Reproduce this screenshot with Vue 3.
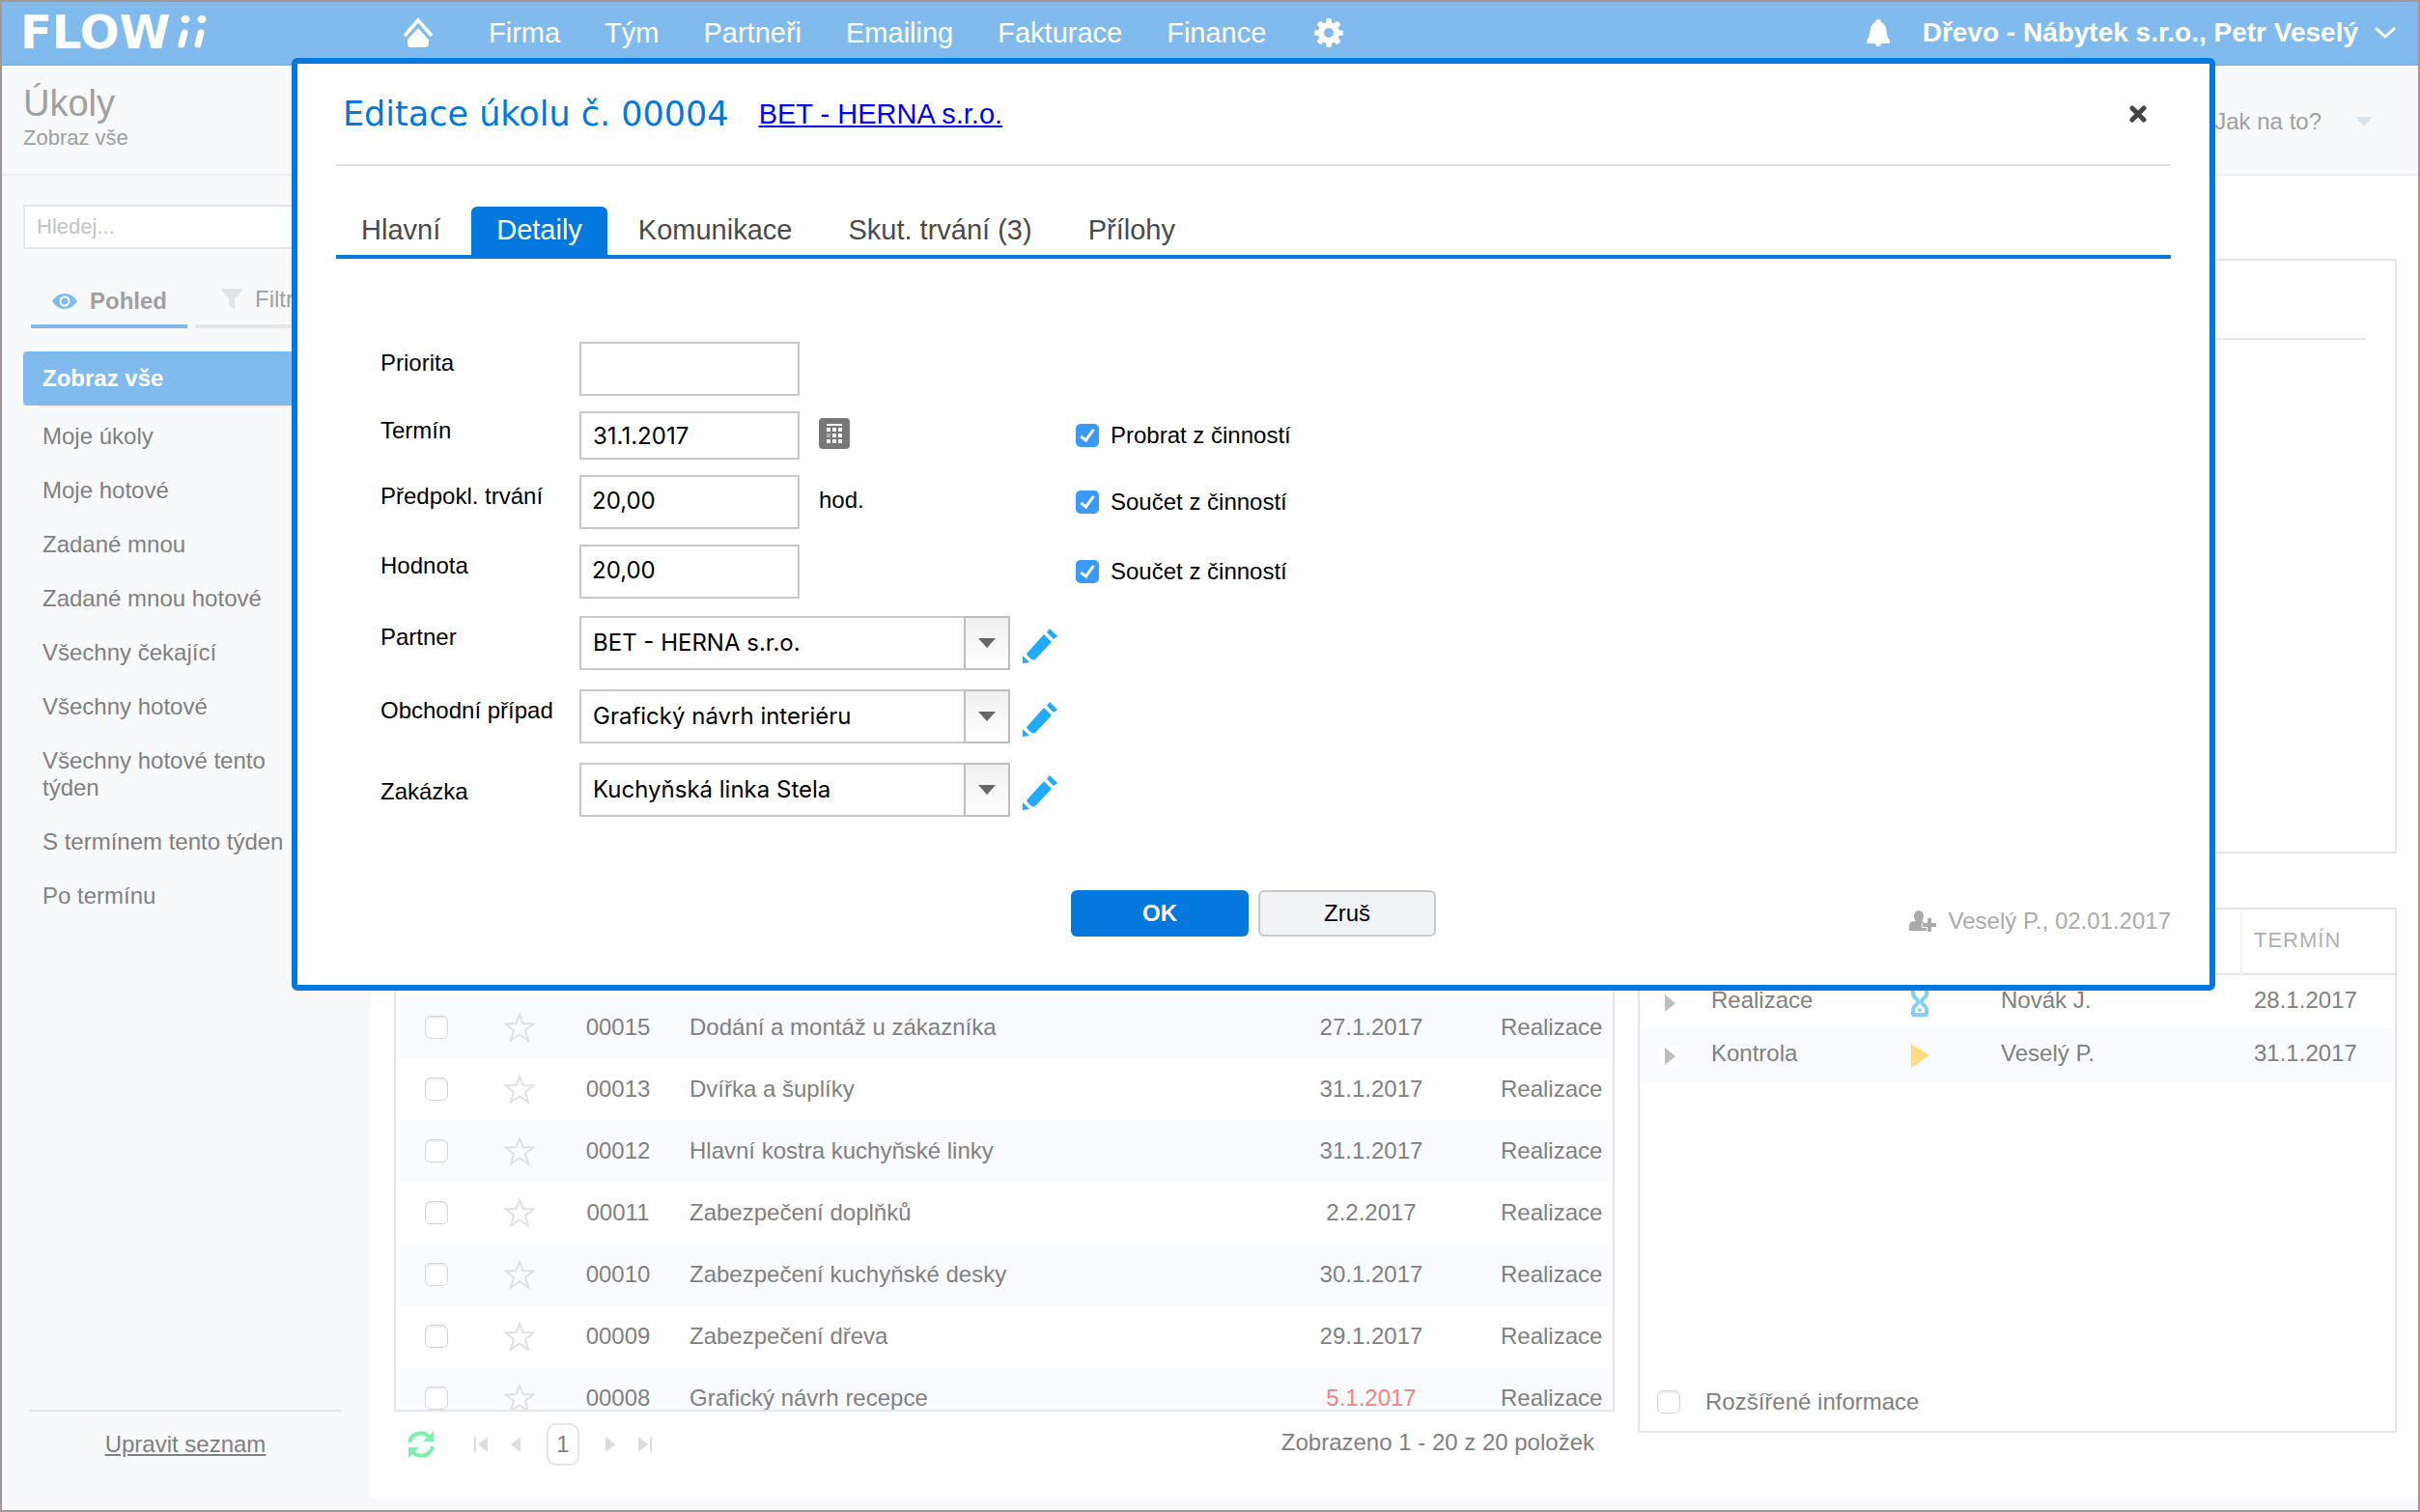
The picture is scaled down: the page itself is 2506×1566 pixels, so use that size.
<script setup>
import { ref } from 'vue'

const menu = ['Firma', 'Tým', 'Partneři', 'Emailing', 'Fakturace', 'Finance']

const views = [
  'Zobraz vše',
  'Moje úkoly',
  'Moje hotové',
  'Zadané mnou',
  'Zadané mnou hotové',
  'Všechny čekající',
  'Všechny hotové',
  'Všechny hotové tento týden',
  'S termínem tento týden',
  'Po termínu',
]
const activeView = ref('Zobraz vše')

const tasks = [
  { id: '00015', name: 'Dodání a montáž u zákazníka', due: '27.1.2017', phase: 'Realizace' },
  { id: '00013', name: 'Dvířka a šuplíky', due: '31.1.2017', phase: 'Realizace' },
  { id: '00012', name: 'Hlavní kostra kuchyňské linky', due: '31.1.2017', phase: 'Realizace' },
  { id: '00011', name: 'Zabezpečení doplňků', due: '2.2.2017', phase: 'Realizace' },
  { id: '00010', name: 'Zabezpečení kuchyňské desky', due: '30.1.2017', phase: 'Realizace' },
  { id: '00009', name: 'Zabezpečení dřeva', due: '29.1.2017', phase: 'Realizace' },
  { id: '00008', name: 'Grafický návrh recepce', due: '5.1.2017', phase: 'Realizace', late: true },
]

const phases = [
  { name: 'Realizace', state: 'waiting', user: 'Novák J.', due: '28.1.2017' },
  { name: 'Kontrola', state: 'running', user: 'Veselý P.', due: '31.1.2017' },
]

const tabs = ['Hlavní', 'Detaily', 'Komunikace', 'Skut. trvání (3)', 'Přílohy']
const activeTab = ref('Detaily')

const priority = ref('')
const due = ref('31.1.2017')
const duration = ref('20,00')
const amount = ref('20,00')
const takeDue = ref(true)
const sumDuration = ref(true)
const sumAmount = ref(true)

const links = [
  { key: 'partner', label: 'Partner', value: 'BET - HERNA s.r.o.' },
  { key: 'deal', label: 'Obchodní případ', value: 'Grafický návrh interiéru' },
  { key: 'order', label: 'Zakázka', value: 'Kuchyňská linka Stela' },
]
</script>

<template>
  <div class="app">
    <header class="topbar">
      <a class="logo" href="#" aria-label="FLOWii">
        <svg width="200" height="64" viewBox="0 0 200 64">
          <text x="5" y="48" class="wordmark">FLOW</text>
          <g stroke="#fff" stroke-width="7" stroke-linecap="round">
            <path d="M175 32 L172 44" />
            <path d="M192 32 L189 44" />
          </g>
          <ellipse cx="176" cy="18" rx="4.500" ry="4" fill="#fff" />
          <ellipse cx="193" cy="18" rx="4.500" ry="4" fill="#fff" />
        </svg>
      </a>
      <nav class="menu">
        <a class="home" href="#" aria-label="Domů">
          <svg width="32" height="32" viewBox="0 0 32 32">
            <path d="M2 19 L16 3 L30 19" fill="none" stroke="#fff" stroke-width="3.500" />
            <path d="M16 11 L27 23 V27 Q27 31 23 31 H9 Q5 31 5 27 V23 Z" fill="#fff" />
          </svg>
        </a>
        <a v-for="item in menu" :key="item" href="#">{{ item }}</a>
        <a class="gear" href="#" aria-label="Nastavení">
          <svg width="32" height="32" viewBox="0 0 32 32">
            <circle cx="16" cy="16" r="8" fill="none" stroke="#fff" stroke-width="6" />
            <g fill="#fff">
              <rect v-for="n in 8" :key="n" x="13" y="1" width="6" height="6" rx="2" :transform="`rotate(${n * 45} 16 16)`" />
            </g>
          </svg>
        </a>
      </nav>
      <div class="account">
        <a href="#" aria-label="Upozornění">
          <svg width="26" height="28" viewBox="0 0 26 28">
            <path d="M13 0 Q16 0 16 3 Q21 5 21.500 12 Q22 19 25 22 V25 H1 V22 Q4 19 4.500 12 Q5 5 10 3 Q10 0 13 0 Z M10 25 H16 Q16 28 13 28 Q10 28 10 25 Z" fill="#fff" />
          </svg>
        </a>
        <a class="user" href="#">
          Dřevo - Nábytek s.r.o., Petr Veselý
          <svg width="24" height="14" viewBox="0 0 24 14">
            <path d="M2 2 L12 11 L22 2" fill="none" stroke="#fff" stroke-width="3" />
          </svg>
        </a>
      </div>
    </header>

    <section class="titlebar">
      <div>
        <h1>Úkoly</h1>
        <p>Zobraz vše</p>
      </div>
      <a class="help" href="#">
        Jak na to?
        <svg width="18" height="10" viewBox="0 0 18 10"><path d="M0 0 H18 L9 10 Z" fill="#dde3e8" /></svg>
      </a>
    </section>

    <div class="body">
      <aside class="sidebar">
        <input class="search" type="search" placeholder="Hledej..." aria-label="Hledej" />
        <div class="modes">
          <button class="mode on" type="button">
            <svg width="26" height="18" viewBox="0 0 26 18">
              <path d="M0 9 Q5 1 13 1 Q21 1 26 9 Q21 17 13 17 Q5 17 0 9 Z" fill="#81bbee" />
              <circle cx="13" cy="9" r="4.500" fill="none" stroke="#f8f9fb" stroke-width="2" />
            </svg>
            Pohled
          </button>
          <button class="mode" type="button">
            <svg width="22" height="22" viewBox="0 0 22 22">
              <path d="M0 0 H22 Q21 4 14 10 V22 L8 17 V10 Q1 4 0 0 Z" fill="#e4e4e4" />
            </svg>
            Filtr
          </button>
        </div>
        <ul class="views">
          <li v-for="view in views" :key="view">
            <a href="#" :class="{ on: view === activeView }" @click.prevent="activeView = view">{{ view }}</a>
          </li>
        </ul>
        <div class="sidefoot"><a href="#">Upravit seznam</a></div>
      </aside>

      <main class="content">
        <section class="panel preview"><hr /></section>

        <section class="list">
          <div class="panel tasks">
            <table>
              <colgroup>
                <col class="c-check" />
                <col class="c-star" />
                <col class="c-id" />
                <col />
                <col class="c-due" />
                <col class="c-phase" />
              </colgroup>
              <thead>
                <tr><td colspan="6"></td></tr>
              </thead>
              <tbody>
                <tr v-for="task in tasks" :key="task.id">
                  <td class="mid"><input class="box" type="checkbox" :aria-label="task.id" /></td>
                  <td class="mid">
                    <svg class="star" width="32" height="32" viewBox="0 0 32 32">
                      <path d="M16 3 L19.500 12 L30 12.500 L22 19 L25 29.500 L16 23.500 L7 29.500 L10 19 L2 12.500 L12.500 12 Z" fill="none" stroke="#e0e0e0" stroke-width="2" />
                    </svg>
                  </td>
                  <td class="mid">{{ task.id }}</td>
                  <td class="name">{{ task.name }}</td>
                  <td class="mid" :class="{ late: task.late }">{{ task.due }}</td>
                  <td class="phase">{{ task.phase }}</td>
                </tr>
              </tbody>
            </table>
          </div>
          <div class="pager">
            <button class="refresh" type="button" aria-label="Obnovit">
              <svg width="30" height="30" viewBox="0 0 30 30">
                <path d="M3 13 Q5 4 14 3.500 Q20 3 23 7" fill="none" stroke="#80efad" stroke-width="4" />
                <path d="M28 1 V12 H17 Z" fill="#80efad" />
                <path d="M27 17 Q25 26 16 26.500 Q10 27 7 23" fill="none" stroke="#80efad" stroke-width="4" />
                <path d="M2 29 V18 H13 Z" fill="#80efad" />
              </svg>
            </button>
            <button type="button" aria-label="První">
              <svg width="14" height="16" viewBox="0 0 14 16"><path d="M0 0 H2 V16 H0 Z M14 0 V16 L4 8 Z" fill="#dcdcdc" /></svg>
            </button>
            <button type="button" aria-label="Předchozí">
              <svg width="10" height="16" viewBox="0 0 10 16"><path d="M10 0 V16 L0 8 Z" fill="#dcdcdc" /></svg>
            </button>
            <button class="page" type="button">1</button>
            <button type="button" aria-label="Další">
              <svg width="10" height="16" viewBox="0 0 10 16"><path d="M0 0 V16 L10 8 Z" fill="#dcdcdc" /></svg>
            </button>
            <button type="button" aria-label="Poslední">
              <svg width="14" height="16" viewBox="0 0 14 16"><path d="M12 0 H14 V16 H12 Z M0 0 V16 L10 8 Z" fill="#dcdcdc" /></svg>
            </button>
            <span class="count">Zobrazeno 1 - 20 z 20 položek</span>
          </div>
        </section>

        <section class="panel phases">
          <table>
            <colgroup>
              <col class="p-open" />
              <col class="p-name" />
              <col class="p-state" />
              <col />
              <col class="p-due" />
            </colgroup>
            <thead>
              <tr>
                <td colspan="4"></td>
                <th scope="col">TERMÍN</th>
              </tr>
            </thead>
            <tbody>
              <tr v-for="phase in phases" :key="phase.name">
                <td class="open">
                  <svg width="20" height="22" viewBox="0 0 20 22">
                    <rect width="20" height="22" fill="#fff" />
                    <path d="M6 2 L17 11 L6 20 Z" fill="#bdbdbd" />
                  </svg>
                </td>
                <td>{{ phase.name }}</td>
                <td class="state">
                  <svg v-if="phase.state === 'waiting'" width="20" height="32" viewBox="0 0 20 32">
                    <path d="M2 2 H18 M2 29 H18 M3 2 V7 Q3 10 7 13 Q9 15.500 7 18 Q3 21 3 24 V29 M17 2 V7 Q17 10 13 13 Q11 15.500 13 18 Q17 21 17 24 V29" fill="none" stroke="#80d1f8" stroke-width="4" />
                    <circle cx="10" cy="24" r="2" fill="#80d1f8" />
                  </svg>
                  <svg v-else width="20" height="32" viewBox="0 0 20 32">
                    <path d="M1 4 L20 16 L1 29 Z" fill="#ffdc80" />
                  </svg>
                </td>
                <td>{{ phase.user }}</td>
                <td class="date">{{ phase.due }}</td>
              </tr>
            </tbody>
          </table>
          <label class="extended"><input class="box" type="checkbox" />Rozšířené informace</label>
        </section>
      </main>
    </div>

    <div class="dialog" role="dialog" aria-labelledby="dialog-title">
      <header class="dialog-head">
        <h2 id="dialog-title">Editace úkolu č. 00004</h2>
        <a href="#">BET - HERNA s.r.o.</a>
        <button class="close" type="button" aria-label="Zavřít">
          <svg width="18" height="18" viewBox="0 0 18 18">
            <path d="M3 3 L15 15 M15 3 L3 15" stroke="#444" stroke-width="5" stroke-linecap="round" />
          </svg>
        </button>
      </header>

      <div class="tabs" role="tablist">
        <button v-for="tab in tabs" :key="tab" type="button" role="tab" :class="{ on: tab === activeTab }" @click="activeTab = tab">{{ tab }}</button>
      </div>

      <form class="form" @submit.prevent>
        <div class="row">
          <label for="priority">Priorita</label>
          <div class="field"><input id="priority" v-model="priority" class="text" type="text" /></div>
        </div>
        <div class="row short">
          <label for="due">Termín</label>
          <div class="field">
            <input id="due" v-model="due" class="text" type="text" />
            <button class="icon calendar" type="button" aria-label="Kalendář">
              <svg width="32" height="32" viewBox="0 0 32 32">
                <rect width="32" height="32" rx="4" fill="#787878" />
                <rect x="8" y="6" width="16" height="2" fill="#fff" />
                <template v-for="r in 3" :key="r">
                  <rect v-for="c in 3" :key="c" :x="2 + c * 6" :y="4 + r * 6" width="4" height="4" fill="#fff" :opacity="r === 2 && c === 1 ? 0.4 : 1" />
                </template>
              </svg>
            </button>
          </div>
          <label class="tick"><input v-model="takeDue" type="checkbox" />Probrat z činností</label>
        </div>
        <div class="row">
          <label for="duration">Předpokl. trvání</label>
          <div class="field">
            <input id="duration" v-model="duration" class="text number" type="text" />
            <span class="unit">hod.</span>
          </div>
          <label class="tick"><input v-model="sumDuration" type="checkbox" />Součet z činností</label>
        </div>
        <div class="row">
          <label for="amount">Hodnota</label>
          <div class="field"><input id="amount" v-model="amount" class="text number" type="text" /></div>
          <label class="tick"><input v-model="sumAmount" type="checkbox" />Součet z činností</label>
        </div>
        <div v-for="link in links" :key="link.key" class="row linked" :class="link.key">
          <label :for="link.key">{{ link.label }}</label>
          <div class="field">
            <div class="combo">
              <select :id="link.key"><option>{{ link.value }}</option></select>
              <span class="arrow">
                <svg width="18" height="10" viewBox="0 0 18 10"><path d="M0 0 H18 L9 10 Z" fill="#666" /></svg>
              </span>
            </div>
            <button class="icon pencil" type="button" aria-label="Upravit">
              <svg width="36" height="36" viewBox="0 0 36 36">
                <g fill="#22aaff">
                  <path d="M0 36 V28 L7 35 Z" />
                  <path d="M4 26 L22 6 L30 14 L14 31 Q11 34 8 31 L5 28 Z" />
                  <path d="M25 4 L28 0 L36 8 L32 11 Z" />
                </g>
              </svg>
            </button>
          </div>
        </div>
      </form>

      <footer class="dialog-foot">
        <span></span>
        <div class="actions">
          <button class="ok" type="button">OK</button>
          <button class="cancel" type="button">Zruš</button>
        </div>
        <div class="author">
          <svg width="28" height="22" viewBox="0 0 28 22">
            <g fill="#aaa">
              <ellipse cx="10" cy="6" rx="5" ry="6" />
              <path d="M0 21 V16 Q0 11 6 11 H14 L15 13 H13 V18 H18 V21 Z" />
              <path d="M19 8 H23 V13 H28 V17 H23 V22 H19 V17 H14 V13 H19 Z" />
            </g>
          </svg>
          Veselý P., 02.01.2017
        </div>
      </footer>
    </div>
  </div>
</template>

<style>
body {
  margin: 0;
}
</style>

<style scoped>
.app {
  position: relative;
  display: flex;
  flex-direction: column;
  box-sizing: border-box;
  height: 100vh;
  border: 2px solid #a09896;
  background: #f8f9fb;
  color: #808080;
  font: 24px/28px "Liberation Sans", Arial, sans-serif;
}
.app *,
.app *::before {
  box-sizing: border-box;
}
svg {
  display: block;
  flex: none;
}
button,
input,
select {
  font: inherit;
  color: inherit;
}
button {
  padding: 0;
  border: 0;
  background: none;
}
a {
  color: inherit;
  text-decoration: none;
}

/* top navigation */
.topbar {
  display: flex;
  align-items: center;
  flex: none;
  height: 66px;
  padding: 0 22px 0 14px;
  border-bottom: 2px solid #7db2e4;
  background: #81bbee;
  color: #fff;
  font-size: 28px;
}
.wordmark {
  font: bold 48px "DejaVu Sans", sans-serif;
  fill: #fff;
}
.menu {
  display: flex;
  align-items: center;
  gap: 46px;
  margin-left: 201px;
  font-size: 29px;
}
.home {
  margin-right: 11px;
}
.gear {
  margin-left: 3px;
}
.account {
  display: flex;
  align-items: center;
  gap: 33px;
  margin-left: auto;
}
.user {
  display: flex;
  align-items: center;
  gap: 16px;
  font-weight: bold;
}

/* page title */
.titlebar {
  display: flex;
  justify-content: space-between;
  flex: none;
  height: 114px;
  padding: 17px 47px 0 22px;
  border-bottom: 2px solid #ebeef2;
  color: #a0a0a0;
}
.titlebar h1 {
  margin: 0;
  font-size: 38px;
  font-weight: normal;
  line-height: 44px;
}
.titlebar p {
  margin: 0;
  font-size: 22px;
  line-height: 28px;
}
.help {
  display: flex;
  align-items: center;
  gap: 35px;
  height: 82px;
}

.body {
  display: flex;
  flex: 1;
  min-height: 0;
}

/* sidebar */
.sidebar {
  display: flex;
  flex-direction: column;
  flex: none;
  width: 382px;
  padding: 30px 30px 0 22px;
}
.search {
  height: 46px;
  padding: 0 12px;
  border: 2px solid #e6e6e6;
  background: #fff;
  font-size: 22px;
}
.search::placeholder {
  color: #c4c4c4;
}
.modes {
  display: flex;
  gap: 8px;
  margin: 26px 0 24px 8px;
}
.mode {
  display: flex;
  align-items: center;
  gap: 13px;
  flex: 1;
  height: 56px;
  padding-left: 27px;
  border-bottom: 4px solid #e6e6e6;
  color: #a0a0a0;
}
.mode.on {
  flex: none;
  width: 162px;
  padding-top: 4px;
  padding-left: 22px;
  border-color: #81bbee;
  font-weight: bold;
}
.views {
  margin: 0;
  padding: 0;
  list-style: none;
}
.views li:first-child::after {
  content: "";
  display: block;
  height: 2px;
  margin: 0 0 2px 16px;
  background: #eef0f2;
}
.views a {
  display: block;
  padding: 14px 36px 14px 20px;
}
.views a.on {
  border-radius: 4px;
  background: #81bbee;
  color: #fff;
  font-weight: bold;
}
.sidefoot {
  display: flex;
  justify-content: center;
  height: 104px;
  margin: auto 0 0 6px;
  padding-top: 20px;
  border-top: 2px solid #e6e6e6;
}
.sidefoot a {
  text-decoration: underline;
}

/* content */
.content {
  display: grid;
  flex: 1;
  grid-template-columns: 1fr 786px;
  grid-template-rows: 616px 1fr;
  gap: 56px 24px;
  min-width: 0;
  margin-bottom: 12px;
  padding: 86px 22px 0 24px;
  background: #fff;
}
.panel {
  border: 2px solid #e6e6e6;
  background: #fff;
}
table {
  width: 100%;
  table-layout: fixed;
  border-collapse: collapse;
}
td,
th {
  padding: 0;
  text-align: left;
}
.preview {
  grid-column: 2;
}
.preview hr {
  margin: 80px 30px 0;
  border: 0;
  border-top: 2px solid #e6e6e6;
}
.list {
  display: flex;
  flex-direction: column;
  min-height: 0;
}
.tasks {
  flex: 1;
  min-height: 0;
  overflow: hidden;
}
.tasks thead td {
  height: 90px;
}
.tasks tbody tr {
  height: 64px;
}
.tasks tbody tr:nth-child(odd),
.phases tbody tr:nth-child(even) {
  background: #fafbfe;
}
.c-check {
  width: 84px;
}
.c-star {
  width: 88px;
}
.c-id {
  width: 116px;
}
.c-due {
  width: 160px;
}
.c-phase {
  width: 170px;
}
td.mid {
  text-align: center;
}
td.mid svg,
td.mid input {
  margin: 0 auto;
}
td.name {
  padding-left: 16px;
}
td.phase {
  padding-left: 54px;
}
td.late {
  color: #ff7f7f;
}
.box {
  appearance: none;
  display: block;
  flex: none;
  width: 24px;
  height: 24px;
  margin: 0;
  border: 1px solid #d4d4d4;
  border-radius: 6px;
  background: #fff;
  box-shadow: inset 0 2px 2px #f0f0f0;
}
.pager {
  display: flex;
  align-items: center;
  flex: none;
  gap: 24px;
  height: 90px;
  padding: 0 21px 22px 13px;
}
.refresh {
  margin-right: 16px;
}
.page {
  width: 34px;
  height: 44px;
  margin: 0 3px;
  border: 2px solid #e6e6e6;
  border-radius: 10px;
}
.count {
  margin-left: auto;
  padding-bottom: 4px;
}

.phases {
  display: flex;
  flex-direction: column;
  margin-bottom: 68px;
}
.phases thead tr {
  height: 67px;
  border-bottom: 2px solid #e6e6e6;
}
.phases th {
  padding: 0 0 2px 12px;
  border-left: 2px solid #f4f4f4;
  color: #b0b0b0;
  font-size: 22px;
  font-weight: normal;
  letter-spacing: 1px;
}
.phases tbody td {
  height: 56px;
  padding-bottom: 4px;
}
.p-open {
  width: 74px;
}
.p-name {
  width: 187px;
}
.p-state {
  width: 113px;
}
.p-due {
  width: 159px;
}
.phases td.open {
  padding: 2px 0 0 20px;
}
.phases td.state {
  padding: 0 0 0 19px;
}
.phases td.date {
  padding-left: 13px;
}
.extended {
  display: flex;
  align-items: center;
  gap: 26px;
  margin-top: auto;
  padding: 0 18px 16px;
}

/* edit dialog */
.dialog {
  position: absolute;
  top: 58px;
  right: 210px;
  left: 300px;
  padding: 0 40px 50px;
  border: 6px solid #0078dd;
  border-radius: 6px;
  background: #fff;
  color: #000;
}
.dialog-head {
  display: flex;
  align-items: center;
  gap: 31px;
  height: 106px;
  padding: 0 25px 0 7px;
  border-bottom: 2px solid #dcdcdc;
}
.dialog-head h2 {
  margin: 0;
  color: #0078dd;
  font: 35px/44px "DejaVu Sans", Verdana, sans-serif;
}
.dialog-head a {
  color: #00e;
  font-size: 29px;
  text-decoration: underline;
}
.close {
  margin-left: auto;
}
.tabs {
  display: flex;
  gap: 6px;
  margin-top: 42px;
  border-bottom: 4px solid #0078dd;
}
.tabs button {
  height: 50px;
  padding: 0 26px 2px;
  border-radius: 6px 6px 0 0;
  color: #4a4a4a;
  font-size: 29px;
}
.tabs button.on {
  background: #0078dd;
  color: #fff;
}
.form {
  display: flex;
  flex-direction: column;
  gap: 16px;
  padding: 86px 0 76px 46px;
}
.row {
  display: flex;
  height: 56px;
}
.row.short {
  height: 50px;
}
.row > label:first-child {
  width: 206px;
  padding-top: 8px;
}
.row.short > label:first-child {
  padding-top: 6px;
}
.row.partner {
  margin-top: 2px;
}
.row.deal,
.row.order {
  margin-top: 4px;
}
.row.order > label:first-child {
  align-self: center;
  padding-top: 4px;
}
.field {
  display: flex;
  align-items: center;
  gap: 20px;
  width: 514px;
}
.linked .field {
  gap: 13px;
}
.text,
.combo select {
  height: 100%;
  margin: 0;
  border: 2px solid #c8c8c8;
  border-radius: 0;
  background: #fff;
  font-family: Inter, "Liberation Sans", sans-serif;
  font-size: 24px;
}
.text {
  width: 228px;
  padding: 0 12px;
}
.text.number {
  padding: 0 11px 4px;
}
.unit,
.calendar {
  padding-bottom: 4px;
}
.combo {
  position: relative;
  width: 446px;
  height: 100%;
}
.combo select {
  appearance: none;
  width: 100%;
  padding: 0 60px 0 12px;
}
.arrow {
  position: absolute;
  top: 0;
  right: 0;
  bottom: 0;
  display: flex;
  align-items: center;
  justify-content: center;
  width: 48px;
  border: 2px solid #bebebe;
  background: linear-gradient(#f0f0f0, #fff);
  pointer-events: none;
}
.pencil {
  padding-top: 6px;
}
.tick {
  display: flex;
  align-items: center;
  gap: 12px;
}
.tick input {
  appearance: none;
  position: relative;
  width: 24px;
  height: 24px;
  margin: 0;
  border-radius: 5px;
  background: #fff;
  box-shadow: inset 0 0 0 1px #c8c8c8;
}
.tick input:checked {
  background: #3b99fc;
  box-shadow: none;
}
.tick input:checked::before {
  content: "";
  position: absolute;
  top: 3px;
  left: 8px;
  width: 8px;
  height: 15px;
  border: solid #fff;
  border-width: 0 3px 3px 0;
  transform: rotate(36deg);
}
.dialog-foot {
  display: grid;
  grid-template-columns: 1fr auto 1fr;
}
.actions {
  display: flex;
  gap: 10px;
}
.actions button {
  width: 184px;
  height: 48px;
  border-radius: 6px;
}
.actions .ok {
  background: #0078dd;
  color: #fff;
  font-weight: bold;
}
.actions .cancel {
  border: 2px solid #c8c8c8;
  background: #f1f2f6;
}
.author {
  display: flex;
  align-items: center;
  align-self: end;
  justify-content: flex-end;
  gap: 13px;
  color: #aaa;
  line-height: 32px;
}
</style>
